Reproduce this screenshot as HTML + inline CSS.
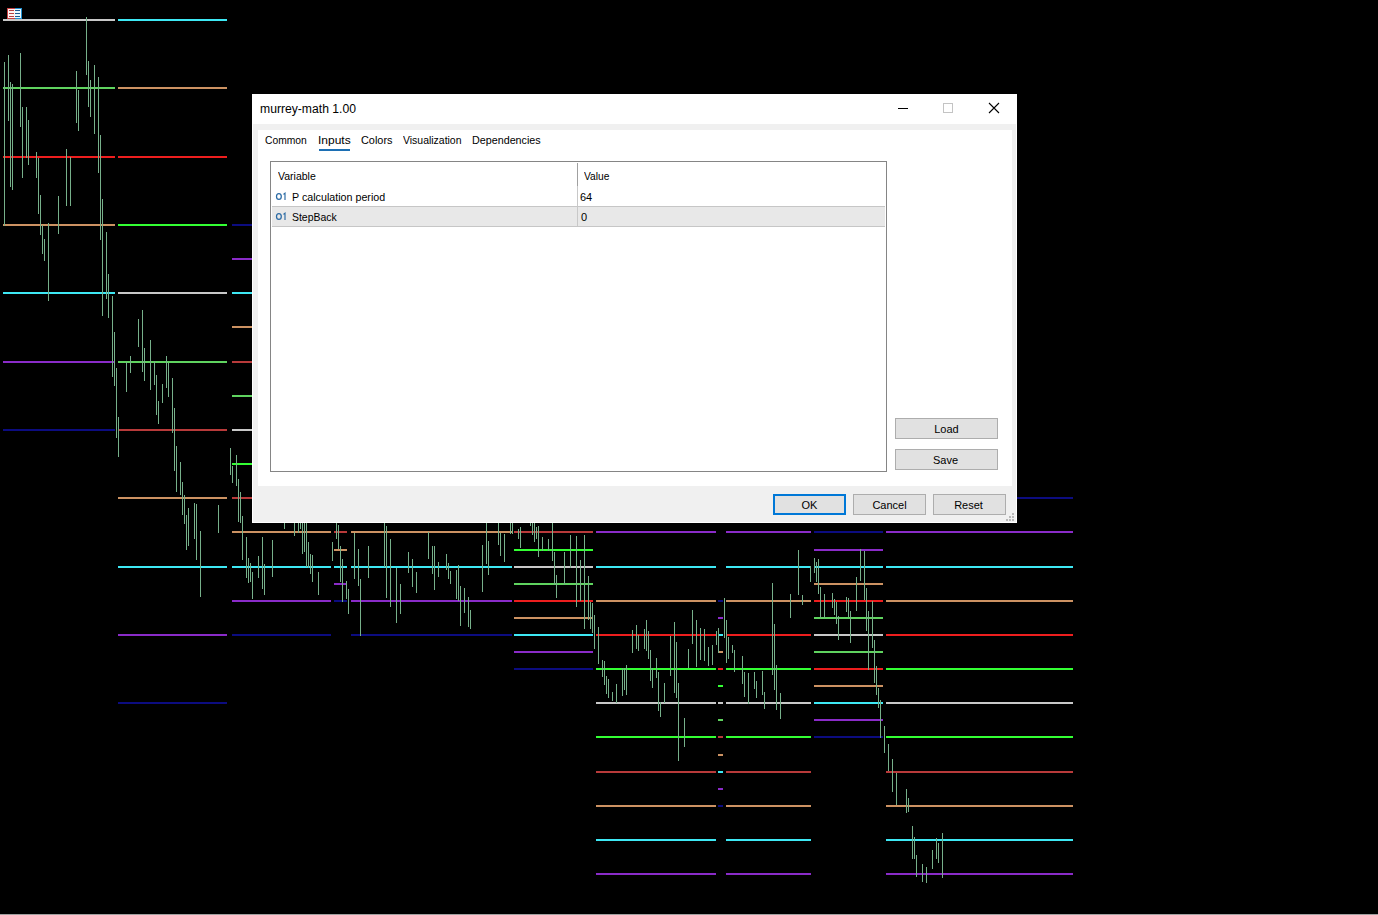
<!DOCTYPE html>
<html><head><meta charset="utf-8"><style>
html,body{margin:0;padding:0;background:#000;width:1378px;height:915px;overflow:hidden;position:relative}
.t{position:absolute;font-family:"Liberation Sans",sans-serif;line-height:0;white-space:nowrap;transform-origin:0 0;height:0}
.btn{position:absolute;background:#e1e1e1;border:1px solid #adadad;font-family:"Liberation Sans",sans-serif;font-size:11px;color:#000;text-align:center;line-height:19px}
</style></head><body>
<svg width="1378" height="915" style="position:absolute;left:0;top:0" shape-rendering="crispEdges">
<rect x="3" y="19" width="112" height="2" fill="#c8c8c8"/><rect x="3" y="87" width="112" height="2" fill="#5fd35f"/><rect x="3" y="156" width="112" height="2" fill="#ee1e1e"/><rect x="3" y="224" width="112" height="2" fill="#cc9262"/><rect x="3" y="292" width="112" height="2" fill="#3ee8f4"/><rect x="3" y="361" width="112" height="2" fill="#8a2bc8"/><rect x="3" y="429" width="112" height="2" fill="#0c0c80"/><rect x="118" y="19" width="109" height="2" fill="#3ee8f4"/><rect x="118" y="87" width="109" height="2" fill="#cc9262"/><rect x="118" y="156" width="109" height="2" fill="#ee1e1e"/><rect x="118" y="224" width="109" height="2" fill="#33ff33"/><rect x="118" y="292" width="109" height="2" fill="#c8c8c8"/><rect x="118" y="361" width="109" height="2" fill="#5fd35f"/><rect x="118" y="429" width="109" height="2" fill="#b83a3a"/><rect x="118" y="497" width="109" height="2" fill="#cc9262"/><rect x="118" y="566" width="109" height="2" fill="#3ee8f4"/><rect x="118" y="634" width="109" height="2" fill="#8a2bc8"/><rect x="118" y="702" width="109" height="2" fill="#0c0c80"/><rect x="232" y="224" width="99" height="2" fill="#0c0c80"/><rect x="232" y="258" width="99" height="2" fill="#8a2bc8"/><rect x="232" y="292" width="99" height="2" fill="#3ee8f4"/><rect x="232" y="326" width="99" height="2" fill="#cc9262"/><rect x="232" y="361" width="99" height="2" fill="#b83a3a"/><rect x="232" y="395" width="99" height="2" fill="#5fd35f"/><rect x="232" y="429" width="99" height="2" fill="#c8c8c8"/><rect x="232" y="463" width="99" height="2" fill="#33ff33"/><rect x="232" y="497" width="99" height="2" fill="#b83a3a"/><rect x="232" y="531" width="99" height="2" fill="#cc9262"/><rect x="232" y="566" width="99" height="2" fill="#3ee8f4"/><rect x="232" y="600" width="99" height="2" fill="#8a2bc8"/><rect x="232" y="634" width="99" height="2" fill="#0c0c80"/><rect x="334" y="395" width="13" height="2" fill="#0c0c80"/><rect x="334" y="412" width="13" height="2" fill="#8a2bc8"/><rect x="334" y="429" width="13" height="2" fill="#3ee8f4"/><rect x="334" y="446" width="13" height="2" fill="#cc9262"/><rect x="334" y="463" width="13" height="2" fill="#ee1e1e"/><rect x="334" y="480" width="13" height="2" fill="#33ff33"/><rect x="334" y="497" width="13" height="2" fill="#c8c8c8"/><rect x="334" y="514" width="13" height="2" fill="#5fd35f"/><rect x="334" y="531" width="13" height="2" fill="#b83a3a"/><rect x="334" y="549" width="13" height="2" fill="#cc9262"/><rect x="334" y="566" width="13" height="2" fill="#3ee8f4"/><rect x="334" y="583" width="13" height="2" fill="#8a2bc8"/><rect x="334" y="600" width="13" height="2" fill="#0c0c80"/><rect x="351" y="224" width="161" height="2" fill="#0c0c80"/><rect x="351" y="258" width="161" height="2" fill="#8a2bc8"/><rect x="351" y="292" width="161" height="2" fill="#3ee8f4"/><rect x="351" y="326" width="161" height="2" fill="#cc9262"/><rect x="351" y="361" width="161" height="2" fill="#ee1e1e"/><rect x="351" y="395" width="161" height="2" fill="#33ff33"/><rect x="351" y="429" width="161" height="2" fill="#c8c8c8"/><rect x="351" y="463" width="161" height="2" fill="#5fd35f"/><rect x="351" y="497" width="161" height="2" fill="#b83a3a"/><rect x="351" y="531" width="161" height="2" fill="#cc9262"/><rect x="351" y="566" width="161" height="2" fill="#3ee8f4"/><rect x="351" y="600" width="161" height="2" fill="#8a2bc8"/><rect x="351" y="634" width="161" height="2" fill="#0c0c80"/><rect x="514" y="463" width="79" height="2" fill="#0c0c80"/><rect x="514" y="480" width="79" height="2" fill="#8a2bc8"/><rect x="514" y="497" width="79" height="2" fill="#3ee8f4"/><rect x="514" y="514" width="79" height="2" fill="#cc9262"/><rect x="514" y="531" width="79" height="2" fill="#b83a3a"/><rect x="514" y="549" width="79" height="2" fill="#33ff33"/><rect x="514" y="566" width="79" height="2" fill="#c8c8c8"/><rect x="514" y="583" width="79" height="2" fill="#5fd35f"/><rect x="514" y="600" width="79" height="2" fill="#ee1e1e"/><rect x="514" y="617" width="79" height="2" fill="#cc9262"/><rect x="514" y="634" width="79" height="2" fill="#3ee8f4"/><rect x="514" y="651" width="79" height="2" fill="#8a2bc8"/><rect x="514" y="668" width="79" height="2" fill="#0c0c80"/><rect x="596" y="497" width="120" height="2" fill="#0c0c80"/><rect x="596" y="531" width="120" height="2" fill="#8a2bc8"/><rect x="596" y="566" width="120" height="2" fill="#3ee8f4"/><rect x="596" y="600" width="120" height="2" fill="#cc9262"/><rect x="596" y="634" width="120" height="2" fill="#ee1e1e"/><rect x="596" y="668" width="120" height="2" fill="#33ff33"/><rect x="596" y="702" width="120" height="2" fill="#c8c8c8"/><rect x="596" y="736" width="120" height="2" fill="#33ff33"/><rect x="596" y="771" width="120" height="2" fill="#b83a3a"/><rect x="596" y="805" width="120" height="2" fill="#cc9262"/><rect x="596" y="839" width="120" height="2" fill="#3ee8f4"/><rect x="596" y="873" width="120" height="2" fill="#8a2bc8"/><rect x="718" y="600" width="5" height="2" fill="#0c0c80"/><rect x="718" y="617" width="5" height="2" fill="#8a2bc8"/><rect x="718" y="634" width="5" height="2" fill="#3ee8f4"/><rect x="718" y="651" width="5" height="2" fill="#cc9262"/><rect x="718" y="668" width="5" height="2" fill="#ee1e1e"/><rect x="718" y="685" width="5" height="2" fill="#33ff33"/><rect x="718" y="702" width="5" height="2" fill="#c8c8c8"/><rect x="718" y="719" width="5" height="2" fill="#5fd35f"/><rect x="718" y="736" width="5" height="2" fill="#b83a3a"/><rect x="718" y="754" width="5" height="2" fill="#cc9262"/><rect x="718" y="771" width="5" height="2" fill="#3ee8f4"/><rect x="718" y="788" width="5" height="2" fill="#8a2bc8"/><rect x="718" y="805" width="5" height="2" fill="#0c0c80"/><rect x="726" y="497" width="85" height="2" fill="#0c0c80"/><rect x="726" y="531" width="85" height="2" fill="#8a2bc8"/><rect x="726" y="566" width="85" height="2" fill="#3ee8f4"/><rect x="726" y="600" width="85" height="2" fill="#cc9262"/><rect x="726" y="634" width="85" height="2" fill="#ee1e1e"/><rect x="726" y="668" width="85" height="2" fill="#33ff33"/><rect x="726" y="702" width="85" height="2" fill="#c8c8c8"/><rect x="726" y="736" width="85" height="2" fill="#33ff33"/><rect x="726" y="771" width="85" height="2" fill="#b83a3a"/><rect x="726" y="805" width="85" height="2" fill="#cc9262"/><rect x="726" y="839" width="85" height="2" fill="#3ee8f4"/><rect x="726" y="873" width="85" height="2" fill="#8a2bc8"/><rect x="814" y="531" width="69" height="2" fill="#0c0c80"/><rect x="814" y="549" width="69" height="2" fill="#8a2bc8"/><rect x="814" y="566" width="69" height="2" fill="#3ee8f4"/><rect x="814" y="583" width="69" height="2" fill="#cc9262"/><rect x="814" y="600" width="69" height="2" fill="#ee1e1e"/><rect x="814" y="617" width="69" height="2" fill="#5fd35f"/><rect x="814" y="634" width="69" height="2" fill="#c8c8c8"/><rect x="814" y="651" width="69" height="2" fill="#5fd35f"/><rect x="814" y="668" width="69" height="2" fill="#ee1e1e"/><rect x="814" y="685" width="69" height="2" fill="#cc9262"/><rect x="814" y="702" width="69" height="2" fill="#3ee8f4"/><rect x="814" y="719" width="69" height="2" fill="#8a2bc8"/><rect x="814" y="736" width="69" height="2" fill="#0c0c80"/><rect x="886" y="497" width="187" height="2" fill="#0c0c80"/><rect x="886" y="531" width="187" height="2" fill="#8a2bc8"/><rect x="886" y="566" width="187" height="2" fill="#3ee8f4"/><rect x="886" y="600" width="187" height="2" fill="#cc9262"/><rect x="886" y="634" width="187" height="2" fill="#ee1e1e"/><rect x="886" y="668" width="187" height="2" fill="#33ff33"/><rect x="886" y="702" width="187" height="2" fill="#c8c8c8"/><rect x="886" y="736" width="187" height="2" fill="#33ff33"/><rect x="886" y="771" width="187" height="2" fill="#b83a3a"/><rect x="886" y="805" width="187" height="2" fill="#cc9262"/><rect x="886" y="839" width="187" height="2" fill="#3ee8f4"/><rect x="886" y="873" width="187" height="2" fill="#8a2bc8"/>
<g fill="#76b08a"><rect x="4" y="62" width="1" height="164"/><rect x="8" y="55" width="1" height="66"/><rect x="10" y="82" width="1" height="105"/><rect x="12" y="84" width="1" height="106"/><rect x="20" y="53" width="1" height="74"/><rect x="22" y="107" width="1" height="71"/><rect x="26" y="107" width="1" height="51"/><rect x="28" y="120" width="1" height="45"/><rect x="36" y="152" width="1" height="26"/><rect x="38" y="158" width="1" height="56"/><rect x="40" y="195" width="1" height="40"/><rect x="42" y="225" width="1" height="29"/><rect x="44" y="239" width="1" height="22"/><rect x="48" y="223" width="1" height="78"/><rect x="58" y="196" width="1" height="38"/><rect x="66" y="149" width="1" height="57"/><rect x="70" y="157" width="1" height="49"/><rect x="76" y="71" width="1" height="52"/><rect x="78" y="90" width="1" height="41"/><rect x="86" y="17" width="1" height="58"/><rect x="88" y="61" width="1" height="46"/><rect x="90" y="80" width="1" height="37"/><rect x="94" y="65" width="1" height="69"/><rect x="98" y="77" width="1" height="96"/><rect x="100" y="135" width="1" height="105"/><rect x="102" y="199" width="1" height="117"/><rect x="106" y="232" width="1" height="67"/><rect x="108" y="274" width="1" height="44"/><rect x="112" y="296" width="1" height="81"/><rect x="114" y="332" width="1" height="54"/><rect x="116" y="368" width="1" height="70"/><rect x="118" y="417" width="1" height="40"/><rect x="126" y="362" width="1" height="30"/><rect x="130" y="356" width="1" height="17"/><rect x="138" y="319" width="1" height="28"/><rect x="142" y="310" width="1" height="62"/><rect x="144" y="348" width="1" height="33"/><rect x="150" y="340" width="1" height="50"/><rect x="154" y="361" width="1" height="24"/><rect x="156" y="375" width="1" height="40"/><rect x="158" y="401" width="1" height="23"/><rect x="162" y="384" width="1" height="19"/><rect x="166" y="356" width="1" height="32"/><rect x="168" y="363" width="1" height="34"/><rect x="172" y="378" width="1" height="55"/><rect x="174" y="408" width="1" height="63"/><rect x="176" y="446" width="1" height="46"/><rect x="180" y="462" width="1" height="33"/><rect x="182" y="482" width="1" height="33"/><rect x="184" y="495" width="1" height="29"/><rect x="186" y="515" width="1" height="35"/><rect x="188" y="508" width="1" height="38"/><rect x="194" y="503" width="1" height="36"/><rect x="196" y="504" width="1" height="56"/><rect x="200" y="531" width="1" height="66"/><rect x="218" y="505" width="1" height="28"/><rect x="230" y="448" width="1" height="27"/><rect x="232" y="466" width="1" height="17"/><rect x="236" y="455" width="1" height="31"/><rect x="238" y="479" width="1" height="43"/><rect x="240" y="492" width="1" height="31"/><rect x="242" y="516" width="1" height="44"/><rect x="246" y="537" width="1" height="41"/><rect x="248" y="558" width="1" height="25"/><rect x="250" y="563" width="1" height="19"/><rect x="252" y="572" width="1" height="27"/><rect x="258" y="556" width="1" height="22"/><rect x="262" y="537" width="1" height="52"/><rect x="264" y="564" width="1" height="31"/><rect x="272" y="540" width="1" height="37"/><rect x="284" y="523" width="1" height="6"/><rect x="294" y="523" width="1" height="13"/><rect x="298" y="523" width="1" height="10"/><rect x="300" y="523" width="1" height="6"/><rect x="302" y="523" width="1" height="31"/><rect x="304" y="523" width="1" height="29"/><rect x="306" y="523" width="1" height="44"/><rect x="308" y="542" width="1" height="26"/><rect x="310" y="554" width="1" height="20"/><rect x="312" y="555" width="1" height="27"/><rect x="318" y="572" width="1" height="23"/><rect x="332" y="542" width="1" height="19"/><rect x="336" y="523" width="1" height="16"/><rect x="338" y="525" width="1" height="24"/><rect x="340" y="546" width="1" height="36"/><rect x="342" y="559" width="1" height="43"/><rect x="346" y="581" width="1" height="18"/><rect x="348" y="589" width="1" height="25"/><rect x="354" y="533" width="1" height="46"/><rect x="358" y="549" width="1" height="37"/><rect x="360" y="579" width="1" height="57"/><rect x="368" y="546" width="1" height="32"/><rect x="384" y="523" width="1" height="44"/><rect x="386" y="526" width="1" height="72"/><rect x="390" y="539" width="1" height="68"/><rect x="396" y="568" width="1" height="55"/><rect x="400" y="584" width="1" height="30"/><rect x="408" y="552" width="1" height="21"/><rect x="412" y="559" width="1" height="28"/><rect x="416" y="572" width="1" height="21"/><rect x="428" y="532" width="1" height="27"/><rect x="432" y="546" width="1" height="28"/><rect x="434" y="546" width="1" height="44"/><rect x="438" y="562" width="1" height="15"/><rect x="446" y="554" width="1" height="16"/><rect x="448" y="563" width="1" height="16"/><rect x="450" y="571" width="1" height="13"/><rect x="456" y="570" width="1" height="29"/><rect x="458" y="565" width="1" height="36"/><rect x="460" y="586" width="1" height="40"/><rect x="464" y="588" width="1" height="25"/><rect x="468" y="597" width="1" height="30"/><rect x="470" y="610" width="1" height="19"/><rect x="482" y="545" width="1" height="47"/><rect x="486" y="523" width="1" height="41"/><rect x="488" y="541" width="1" height="34"/><rect x="498" y="523" width="1" height="22"/><rect x="500" y="533" width="1" height="23"/><rect x="504" y="534" width="1" height="28"/><rect x="510" y="523" width="1" height="11"/><rect x="512" y="523" width="1" height="11"/><rect x="518" y="529" width="1" height="10"/><rect x="520" y="527" width="1" height="21"/><rect x="530" y="523" width="1" height="3"/><rect x="532" y="523" width="1" height="12"/><rect x="534" y="523" width="1" height="19"/><rect x="536" y="527" width="1" height="12"/><rect x="538" y="526" width="1" height="31"/><rect x="542" y="537" width="1" height="14"/><rect x="548" y="539" width="1" height="12"/><rect x="552" y="523" width="1" height="38"/><rect x="554" y="552" width="1" height="33"/><rect x="556" y="575" width="1" height="23"/><rect x="564" y="552" width="1" height="33"/><rect x="570" y="535" width="1" height="33"/><rect x="576" y="536" width="1" height="71"/><rect x="580" y="560" width="1" height="41"/><rect x="584" y="535" width="1" height="94"/><rect x="588" y="576" width="1" height="44"/><rect x="590" y="602" width="1" height="27"/><rect x="592" y="603" width="1" height="30"/><rect x="594" y="615" width="1" height="34"/><rect x="598" y="627" width="1" height="37"/><rect x="602" y="660" width="1" height="17"/><rect x="604" y="661" width="1" height="24"/><rect x="606" y="676" width="1" height="18"/><rect x="608" y="679" width="1" height="19"/><rect x="612" y="692" width="1" height="9"/><rect x="616" y="684" width="1" height="19"/><rect x="622" y="668" width="1" height="28"/><rect x="624" y="668" width="1" height="22"/><rect x="626" y="665" width="1" height="30"/><rect x="632" y="630" width="1" height="23"/><rect x="636" y="625" width="1" height="24"/><rect x="638" y="635" width="1" height="16"/><rect x="644" y="629" width="1" height="20"/><rect x="646" y="620" width="1" height="31"/><rect x="648" y="631" width="1" height="28"/><rect x="650" y="650" width="1" height="31"/><rect x="652" y="668" width="1" height="20"/><rect x="656" y="658" width="1" height="20"/><rect x="658" y="672" width="1" height="39"/><rect x="660" y="702" width="1" height="15"/><rect x="664" y="683" width="1" height="20"/><rect x="670" y="636" width="1" height="40"/><rect x="674" y="622" width="1" height="71"/><rect x="676" y="642" width="1" height="56"/><rect x="678" y="683" width="1" height="78"/><rect x="684" y="718" width="1" height="29"/><rect x="688" y="649" width="1" height="19"/><rect x="692" y="610" width="1" height="34"/><rect x="696" y="620" width="1" height="47"/><rect x="700" y="628" width="1" height="32"/><rect x="704" y="629" width="1" height="32"/><rect x="708" y="647" width="1" height="19"/><rect x="712" y="645" width="1" height="20"/><rect x="716" y="631" width="1" height="14"/><rect x="718" y="628" width="1" height="25"/><rect x="724" y="598" width="1" height="40"/><rect x="726" y="620" width="1" height="43"/><rect x="728" y="637" width="1" height="22"/><rect x="732" y="645" width="1" height="8"/><rect x="734" y="650" width="1" height="22"/><rect x="742" y="656" width="1" height="28"/><rect x="744" y="672" width="1" height="25"/><rect x="748" y="673" width="1" height="31"/><rect x="754" y="672" width="1" height="17"/><rect x="756" y="681" width="1" height="17"/><rect x="762" y="671" width="1" height="24"/><rect x="764" y="692" width="1" height="17"/><rect x="772" y="583" width="1" height="92"/><rect x="774" y="624" width="1" height="66"/><rect x="776" y="665" width="1" height="45"/><rect x="780" y="693" width="1" height="26"/><rect x="790" y="594" width="1" height="24"/><rect x="798" y="550" width="1" height="45"/><rect x="802" y="595" width="1" height="10"/><rect x="810" y="566" width="1" height="16"/><rect x="814" y="558" width="1" height="15"/><rect x="816" y="562" width="1" height="20"/><rect x="818" y="559" width="1" height="35"/><rect x="820" y="587" width="1" height="31"/><rect x="824" y="594" width="1" height="24"/><rect x="832" y="593" width="1" height="15"/><rect x="834" y="599" width="1" height="16"/><rect x="836" y="602" width="1" height="22"/><rect x="838" y="616" width="1" height="24"/><rect x="846" y="597" width="1" height="15"/><rect x="848" y="598" width="1" height="19"/><rect x="850" y="611" width="1" height="32"/><rect x="856" y="577" width="1" height="34"/><rect x="860" y="549" width="1" height="32"/><rect x="864" y="551" width="1" height="49"/><rect x="866" y="588" width="1" height="43"/><rect x="868" y="611" width="1" height="59"/><rect x="872" y="601" width="1" height="47"/><rect x="874" y="640" width="1" height="43"/><rect x="876" y="666" width="1" height="29"/><rect x="878" y="688" width="1" height="20"/><rect x="880" y="700" width="1" height="38"/><rect x="884" y="726" width="1" height="27"/><rect x="888" y="744" width="1" height="27"/><rect x="892" y="759" width="1" height="33"/><rect x="896" y="773" width="1" height="32"/><rect x="906" y="789" width="1" height="24"/><rect x="908" y="798" width="1" height="14"/><rect x="912" y="826" width="1" height="33"/><rect x="914" y="837" width="1" height="22"/><rect x="916" y="855" width="1" height="22"/><rect x="922" y="864" width="1" height="18"/><rect x="926" y="867" width="1" height="16"/><rect x="932" y="850" width="1" height="19"/><rect x="936" y="838" width="1" height="21"/><rect x="938" y="843" width="1" height="20"/><rect x="942" y="833" width="1" height="45"/></g>
<rect x="0" y="914" width="1378" height="1" fill="#a0a0a0"/>
</svg>
<svg width="15" height="11" style="position:absolute;left:7px;top:8px" shape-rendering="crispEdges">
<rect x="0" y="0" width="15" height="11" fill="#fff"/><rect x="1" y="1" width="7" height="9" fill="#fff2f2"/><rect x="8" y="1" width="6" height="9" fill="#eaf8ff"/>
<rect x="0" y="0" width="8" height="1" fill="#c84040"/><rect x="0" y="10" width="8" height="1" fill="#c84040"/><rect x="0" y="0" width="1" height="11" fill="#c84040"/>
<rect x="8" y="0" width="7" height="1" fill="#2090d0"/><rect x="8" y="10" width="7" height="1" fill="#2090d0"/><rect x="14" y="0" width="1" height="11" fill="#2090d0"/>
<rect x="2" y="2" width="5" height="1" fill="#b84040"/><rect x="2" y="5" width="5" height="1" fill="#b84040"/><rect x="2" y="8" width="5" height="1" fill="#b84040"/>
<rect x="8" y="2" width="5" height="1" fill="#205a90"/><rect x="8" y="5" width="5" height="1" fill="#205a90"/><rect x="8" y="8" width="5" height="1" fill="#205a90"/>
</svg>

<div style="position:absolute;left:252px;top:94px;width:765px;height:429px;background:#fff;"></div>
<div style="position:absolute;left:253px;top:124px;width:763px;height:398px;background:#f0f0f0;"></div>
<div style="position:absolute;left:258px;top:130px;width:754px;height:356px;background:#fff;"></div>
<div class="t" style="left:260px;top:109px;font-size:12px;color:#000;transform:scaleX(1.013);">murrey-math 1.00</div>
<div style="position:absolute;left:898px;top:108px;width:10px;height:1px;background:#000"></div>
<div style="position:absolute;left:943px;top:103px;width:8px;height:8px;border:1px solid #c4c4c4"></div>
<svg width="12" height="12" style="position:absolute;left:988px;top:102px"><path d="M1 1 L11 11 M11 1 L1 11" stroke="#000" stroke-width="1.1"/></svg>
<div class="t" style="left:265px;top:140px;font-size:11px;color:#000;transform:scaleX(0.937);">Common</div>
<div class="t" style="left:318px;top:140px;font-size:11px;color:#000;transform:scaleX(1.09);">Inputs</div>
<div class="t" style="left:361px;top:140px;font-size:11px;color:#000;transform:scaleX(0.99);">Colors</div>
<div class="t" style="left:403px;top:140px;font-size:11px;color:#000;transform:scaleX(0.95);">Visualization</div>
<div class="t" style="left:472px;top:140px;font-size:11px;color:#000;transform:scaleX(0.977);">Dependencies</div>
<div style="position:absolute;left:319px;top:149px;width:31px;height:2px;background:#1c6fb4"></div>
<div style="position:absolute;left:270px;top:161px;width:615px;height:309px;border:1px solid #858585;background:#fff"></div>
<div style="position:absolute;left:577px;top:163px;width:1px;height:23px;background:#a0a0a0"></div>
<div style="position:absolute;left:577px;top:186px;width:1px;height:40px;background:#c8c8c8"></div>
<div style="position:absolute;left:272px;top:206px;width:613px;height:1px;background:#c6c6c6"></div>
<div style="position:absolute;left:272px;top:207px;width:305px;height:19px;background:#e8e8e8"></div>
<div style="position:absolute;left:578px;top:207px;width:307px;height:19px;background:#e8e8e8"></div>
<div style="position:absolute;left:272px;top:226px;width:613px;height:1px;background:#c6c6c6"></div>
<div class="t" style="left:277.5px;top:176px;font-size:11px;color:#000;transform:scaleX(0.956);">Variable</div>
<div class="t" style="left:584px;top:176px;font-size:11px;color:#000;transform:scaleX(0.93);">Value</div>
<svg width="14" height="10" style="position:absolute;left:274px;top:192px" fill="none" stroke="#2a6aa4"><ellipse cx="4.9" cy="4.4" rx="2.4" ry="2.9" stroke-width="1.25"/><path d="M9.4 2.4 L11 1.2 L11 8" stroke-width="1.15"/></svg>
<div class="t" style="left:291.5px;top:197px;font-size:11px;color:#000;transform:scaleX(0.973);">P calculation period</div>
<div class="t" style="left:580px;top:197px;font-size:11px;color:#000;transform:scaleX(1.0);">64</div>
<svg width="14" height="10" style="position:absolute;left:274px;top:212px" fill="none" stroke="#2a6aa4"><ellipse cx="4.9" cy="4.4" rx="2.4" ry="2.9" stroke-width="1.25"/><path d="M9.4 2.4 L11 1.2 L11 8" stroke-width="1.15"/></svg>
<div class="t" style="left:291.5px;top:217px;font-size:11px;color:#000;transform:scaleX(0.95);">StepBack</div>
<div class="t" style="left:581px;top:217px;font-size:11px;color:#000;transform:scaleX(1.0);">0</div>
<div class="btn" style="left:895px;top:418px;width:101px;height:18px;padding-top:1px">Load</div>
<div class="btn" style="left:895px;top:449px;width:101px;height:18px;padding-top:1px;text-indent:-2px">Save</div>
<div class="btn" style="left:773px;top:494px;width:69px;height:17px;border:2px solid #0078d7">OK</div>
<div class="btn" style="left:853px;top:494px;width:71px;height:18px;padding-top:1px">Cancel</div>
<div class="btn" style="left:933px;top:494px;width:71px;height:18px;padding-top:1px;text-indent:-2px">Reset</div>
<svg width="9" height="9" style="position:absolute;left:1006px;top:513px" shape-rendering="crispEdges" fill="#b8b8b8">
<rect x="6" y="0" width="2" height="2"/><rect x="3" y="3" width="2" height="2"/><rect x="6" y="3" width="2" height="2"/><rect x="0" y="6" width="2" height="2"/><rect x="3" y="6" width="2" height="2"/><rect x="6" y="6" width="2" height="2"/>
</svg>

</body></html>
